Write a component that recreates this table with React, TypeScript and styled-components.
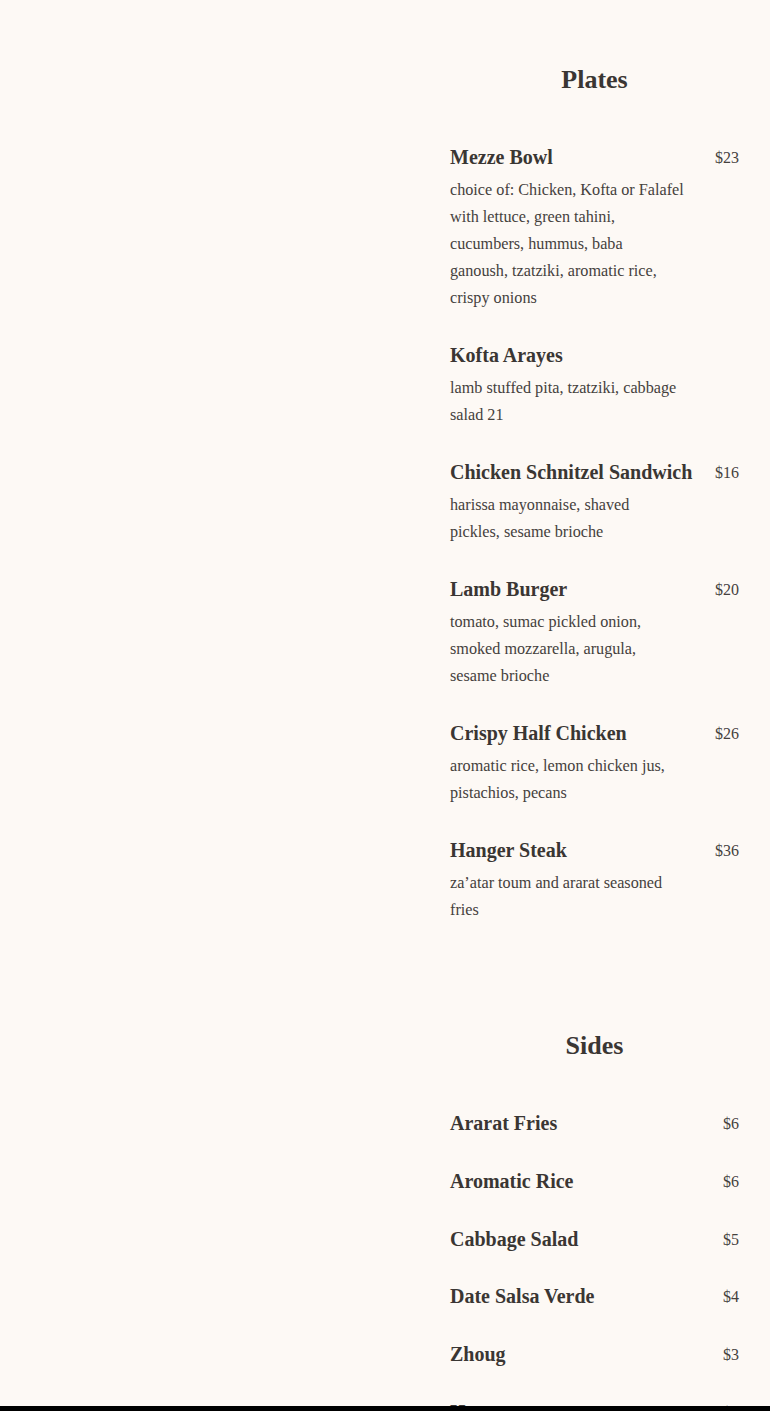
import React from "react";
import styled, { createGlobalStyle } from "styled-components";

const Global = createGlobalStyle`
  html, body { margin: 0; padding: 0; background: #fdf9f5; }
  body { font-family: "Liberation Serif", "Times New Roman", serif; color: #3a3633; }
`;

const Page = styled.div`
  display: grid;
  grid-template-columns: 450px 289px;
  padding-top: 64px;
  min-height: 1411px;
  box-sizing: border-box;
`;

const Aside = styled.div``;

const Menu = styled.main`
  display: flex;
  flex-direction: column;
  gap: 106px;
`;

const Section = styled.section`
  display: flex;
  flex-direction: column;
`;

const Heading = styled.h2`
  margin: 0 0 47px;
  font-size: 26px;
  line-height: 32px;
  font-weight: 700;
  text-align: center;
  color: #3a3633;
`;

const List = styled.div<{ $gap: number }>`
  display: flex;
  flex-direction: column;
  gap: ${(p) => p.$gap}px;
`;

const Item = styled.article`
  display: grid;
  grid-template-columns: 1fr auto;
  column-gap: 10px;
  align-items: start;
`;

const Body = styled.div`
  display: flex;
  flex-direction: column;
  gap: 6px;
  width: 242px;
`;

const Name = styled.h3`
  margin: 0;
  font-size: 20px;
  line-height: 28px;
  font-weight: 700;
  color: #3a3633;
  white-space: nowrap;
`;

const Desc = styled.p`
  margin: 0;
  font-size: 16.2px;
  line-height: 27px;
  color: #45413d;
`;

const Line = styled.span`
  display: block;
  white-space: nowrap;
`;

const Price = styled.span`
  font-size: 16px;
  line-height: 28px;
  padding-top: 1px;
  color: #45413d;
  text-align: right;
`;

const BottomBar = styled.div`
  position: fixed;
  left: 0;
  right: 0;
  bottom: 0;
  height: 5px;
  background: #000;
`;

type Dish = { name: string; desc?: string[]; price?: string };

const plates: Dish[] = [
  {
    name: "Mezze Bowl",
    price: "$23",
    desc: [
      "choice of: Chicken, Kofta or Falafel",
      "with lettuce, green tahini,",
      "cucumbers, hummus, baba",
      "ganoush, tzatziki, aromatic rice,",
      "crispy onions",
    ],
  },
  { name: "Kofta Arayes", desc: ["lamb stuffed pita, tzatziki, cabbage", "salad 21"] },
  { name: "Chicken Schnitzel Sandwich", price: "$16", desc: ["harissa mayonnaise, shaved", "pickles, sesame brioche"] },
  { name: "Lamb Burger", price: "$20", desc: ["tomato, sumac pickled onion,", "smoked mozzarella, arugula,", "sesame brioche"] },
  { name: "Crispy Half Chicken", price: "$26", desc: ["aromatic rice, lemon chicken jus,", "pistachios, pecans"] },
  { name: "Hanger Steak", price: "$36", desc: ["za’atar toum and ararat seasoned", "fries"] },
];

const sides: Dish[] = [
  { name: "Ararat Fries", price: "$6" },
  { name: "Aromatic Rice", price: "$6" },
  { name: "Cabbage Salad", price: "$5" },
  { name: "Date Salsa Verde", price: "$4" },
  { name: "Zhoug", price: "$3" },
  { name: "Hummus", price: "$5" },
];

const MenuItem = ({ d }: { d: Dish }) => (
  <Item>
    <Body>
      <Name>{d.name}</Name>
      {d.desc && (
        <Desc>
          {d.desc.map((l, i) => (
            <Line key={i}>{l}</Line>
          ))}
        </Desc>
      )}
    </Body>
    <Price>{d.price}</Price>
  </Item>
);

export default function App() {
  return (
    <>
      <Global />
      <Page>
        <Aside />
        <Menu>
          <Section>
            <Heading>Plates</Heading>
            <List $gap={29}>
              {plates.map((d) => (
                <MenuItem key={d.name} d={d} />
              ))}
            </List>
          </Section>
          <Section>
            <Heading>Sides</Heading>
            <List $gap={28.75}>
              {sides.map((d) => (
                <MenuItem key={d.name} d={d} />
              ))}
            </List>
          </Section>
        </Menu>
      </Page>
      <BottomBar />
    </>
  );
}
